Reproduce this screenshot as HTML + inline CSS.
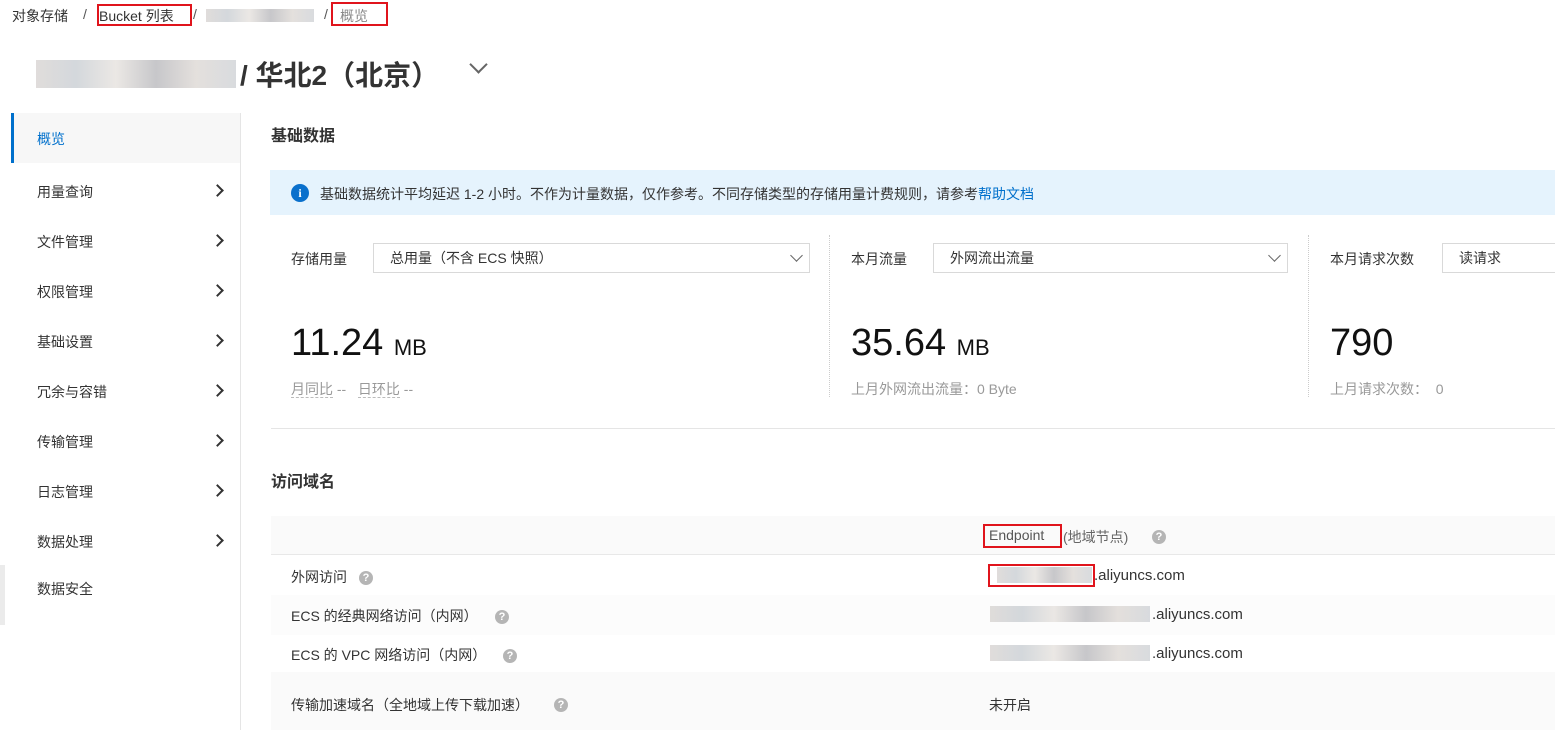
<!DOCTYPE html>
<html><head><meta charset="utf-8"><style>
*{margin:0;padding:0;box-sizing:border-box}
body{width:1555px;height:730px;overflow:hidden;background:#fff;font-family:"Liberation Sans","Noto Sans CJK SC",sans-serif;color:#333;position:relative;font-size:14px}
.a{position:absolute;white-space:nowrap}
.red{position:absolute;border:2px solid #e0141c}
.blur{position:absolute;background:linear-gradient(90deg,#d8d4d2,#c9ced3,#e6e2de,#b9b9bd,#ddd8d4,#cfd2d6);opacity:.8}
.nav{position:absolute;left:37px;font-size:14px;color:#333}
.chev{position:absolute;left:213px;width:9px;height:9px;border-right:2px solid #333;border-top:2px solid #333;transform:rotate(45deg)}
.q{position:absolute;width:14px;height:14px;border-radius:50%;background:#b5b5b5;color:#fff;font-size:11px;font-weight:bold;text-align:center;line-height:14px}
.sel{position:absolute;height:30px;border:1px solid #d9d9d9;font-size:14px;line-height:28px;padding-left:16px;color:#333}
.sel i{position:absolute;right:8px;top:7px;width:9px;height:9px;border-right:1.5px solid #666;border-bottom:1.5px solid #666;transform:rotate(45deg)}
.num{font-size:38px;color:#111;font-weight:300}
</style></head><body>
<div class="a" style="left:12px;top:6px;color:#333">对象存储</div>
<div class="a" style="left:83px;top:6px;color:#555">/</div>
<div class="a" style="left:99px;top:6px;color:#333">Bucket 列表</div>
<div class="red" style="left:97px;top:4px;width:95px;height:22px"></div>
<div class="a" style="left:193px;top:6px;color:#555">/</div>
<div class="blur" style="left:206px;top:9px;width:108px;height:13px"></div>
<div class="a" style="left:324px;top:6px;color:#555">/</div>
<div class="a" style="left:340px;top:6px;color:#888">概览</div>
<div class="red" style="left:331px;top:2px;width:57px;height:24px"></div>

<div class="blur" style="left:36px;top:60px;width:200px;height:28px"></div>
<div class="a" style="left:240px;top:54px;font-size:28px;font-weight:bold;color:#333">/ 华北2（北京）</div>
<div class="a" style="left:472px;top:58px;width:13px;height:13px;border-right:2px solid #666;border-bottom:2px solid #666;transform:rotate(45deg)"></div>

<div class="a" style="left:240px;top:113px;width:1px;height:617px;background:#e5e5e5"></div>
<div class="a" style="left:11px;top:113px;width:229px;height:50px;background:#f7f7f7;border-left:3px solid #0070cc"></div>
<div class="nav" style="top:129px;color:#0070cc">概览</div>
<div class="nav" style="top:182px">用量查询</div><div class="chev" style="top:186px"></div>
<div class="nav" style="top:232px">文件管理</div><div class="chev" style="top:236px"></div>
<div class="nav" style="top:282px">权限管理</div><div class="chev" style="top:286px"></div>
<div class="nav" style="top:332px">基础设置</div><div class="chev" style="top:336px"></div>
<div class="nav" style="top:382px">冗余与容错</div><div class="chev" style="top:386px"></div>
<div class="nav" style="top:432px">传输管理</div><div class="chev" style="top:436px"></div>
<div class="nav" style="top:482px">日志管理</div><div class="chev" style="top:486px"></div>
<div class="nav" style="top:532px">数据处理</div><div class="chev" style="top:536px"></div>
<div class="nav" style="top:579px">数据安全</div>
<div class="a" style="left:0;top:565px;width:5px;height:60px;background:#ebebeb"></div>

<div class="a" style="left:271px;top:122px;font-size:16px;font-weight:bold;color:#333">基础数据</div>
<div class="a" style="left:270px;top:170px;width:1285px;height:45px;background:#e5f3fd"></div>
<div class="a" style="left:291px;top:184px;width:18px;height:18px;border-radius:50%;background:#0a70cc;color:#fff;font-size:12px;font-weight:bold;text-align:center;line-height:18px;font-family:'Liberation Serif',serif">i</div>
<div class="a" style="left:320px;top:184px;font-size:14px;color:#333">基础数据统计平均延迟 1-2 小时。不作为计量数据，仅作参考。不同存储类型的存储用量计费规则，请参考<span style="color:#0070cc">帮助文档</span></div>

<div class="a" style="left:829px;top:235px;height:162px;border-left:1px dotted #ccc"></div>
<div class="a" style="left:1308px;top:235px;height:162px;border-left:1px dotted #ccc"></div>

<div class="a" style="left:291px;top:249px">存储用量</div>
<div class="sel" style="left:373px;top:243px;width:437px">总用量（不含 ECS 快照）<i></i></div>
<div class="a num" style="left:291px;top:322px">11.24 <span style="font-size:22px">MB</span></div>
<div class="a" style="left:291px;top:379px;color:#999"><span style="border-bottom:1px dashed #bbb">月同比</span> -- &nbsp;&nbsp;<span style="border-bottom:1px dashed #bbb">日环比</span> --</div>

<div class="a" style="left:851px;top:249px">本月流量</div>
<div class="sel" style="left:933px;top:243px;width:355px">外网流出流量<i></i></div>
<div class="a num" style="left:851px;top:322px">35.64 <span style="font-size:22px">MB</span></div>
<div class="a" style="left:851px;top:379px;color:#999">上月外网流出流量：0 Byte</div>

<div class="a" style="left:1330px;top:249px">本月请求次数</div>
<div class="sel" style="left:1442px;top:243px;width:120px">读请求</div>
<div class="a num" style="left:1330px;top:322px">790</div>
<div class="a" style="left:1330px;top:379px;color:#999">上月请求次数：&nbsp; 0</div>

<div class="a" style="left:271px;top:428px;width:1284px;height:1px;background:#e5e5e5"></div>
<div class="a" style="left:271px;top:468px;font-size:16px;font-weight:bold">访问域名</div>

<div class="a" style="left:271px;top:516px;width:1284px;height:39px;background:#fafafa;border-bottom:1px solid #e8e8e8"></div>
<div class="a" style="left:271px;top:595px;width:1284px;height:40px;background:#fcfcfc"></div>
<div class="a" style="left:271px;top:672px;width:1284px;height:58px;background:#fafafa"></div>
<div class="a" style="left:989px;top:527px;color:#555">Endpoint</div>
<div class="a" style="left:1063px;top:527px;color:#666">(地域节点)</div>
<div class="red" style="left:983px;top:524px;width:79px;height:24px"></div>
<div class="q" style="left:1152px;top:530px">?</div>

<div class="a" style="left:291px;top:567px">外网访问</div><div class="q" style="left:359px;top:571px">?</div>
<div class="a" style="left:291px;top:606px">ECS 的经典网络访问（内网）</div><div class="q" style="left:495px;top:610px">?</div>
<div class="a" style="left:291px;top:645px">ECS 的 VPC 网络访问（内网）</div><div class="q" style="left:503px;top:649px">?</div>
<div class="a" style="left:291px;top:695px">传输加速域名（全地域上传下载加速）</div><div class="q" style="left:554px;top:698px">?</div>

<div class="blur" style="left:997px;top:567px;width:95px;height:16px"></div>
<div class="a" style="left:1094px;top:567px;font-size:15px">.aliyuncs.com</div>
<div class="red" style="left:988px;top:564px;width:107px;height:23px"></div>
<div class="blur" style="left:990px;top:606px;width:160px;height:16px"></div>
<div class="a" style="left:1152px;top:606px;font-size:15px">.aliyuncs.com</div>
<div class="blur" style="left:990px;top:645px;width:160px;height:16px"></div>
<div class="a" style="left:1152px;top:645px;font-size:15px">.aliyuncs.com</div>
<div class="a" style="left:989px;top:695px">未开启</div>
</body></html>
